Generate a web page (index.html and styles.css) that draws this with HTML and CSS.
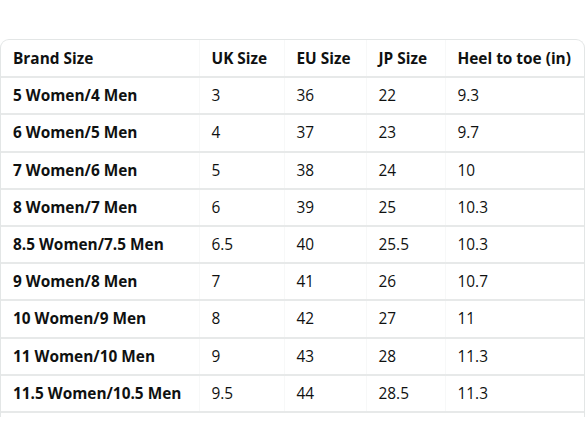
FILE: index.html
```html
<!DOCTYPE html>
<html lang="en">

<head>
    <meta charset="UTF-8">
    <meta name="viewport" content="width=device-width, initial-scale=1.0">
    <title>Size Chart</title>
    <link rel="stylesheet" href="styles.css">
</head>

<body>
    <div class="chart">
        <table>
            <tr>
                <th class="brand">Brand Size</th>
                <th class="uk">UK Size</th>
                <th class="eu">EU Size</th>
                <th class="jp">JP Size</th>
                <th>Heel to toe (in)</th>
            </tr>
            <tr><th>5 Women/4 Men</th><td>3</td><td>36</td><td>22</td><td>9.3</td></tr>
            <tr><th>6 Women/5 Men</th><td>4</td><td>37</td><td>23</td><td>9.7</td></tr>
            <tr><th>7 Women/6 Men</th><td>5</td><td>38</td><td>24</td><td>10</td></tr>
            <tr><th>8 Women/7 Men</th><td>6</td><td>39</td><td>25</td><td>10.3</td></tr>
            <tr><th>8.5 Women/7.5 Men</th><td>6.5</td><td>40</td><td>25.5</td><td>10.3</td></tr>
            <tr><th>9 Women/8 Men</th><td>7</td><td>41</td><td>26</td><td>10.7</td></tr>
            <tr><th>10 Women/9 Men</th><td>8</td><td>42</td><td>27</td><td>11</td></tr>
            <tr><th>11 Women/10 Men</th><td>9</td><td>43</td><td>28</td><td>11.3</td></tr>
            <tr><th>11.5 Women/10.5 Men</th><td>9.5</td><td>44</td><td>28.5</td><td>11.3</td></tr>
        </table>
    </div>
</body>

</html>
```

FILE: styles.css
```css
* {
    margin: 0;
    padding: 0;
    box-sizing: border-box;
}

body {
    background: #fff;
    font-family: "Open Sans", "Noto Sans", sans-serif;
    color: #0f1111;
}

.chart {
    margin-top: 39px;
    width: 585px;
    border: 1px solid #e3e6e6;
    border-bottom: none;
    border-radius: 9px 9px 0 0;
    padding-bottom: 4px;
}

table {
    width: 100%;
    border-collapse: collapse;
    table-layout: fixed;
}

th,
td {
    height: 37.2px;
    padding: 0 0 0 12px;
    text-align: left;
    font-size: 15.4px;
    white-space: nowrap;
    border-bottom: 2px solid #e7e9e9;
    border-left: 1px solid #f7f8f8;
}

th {
    font-weight: 700;
}

td {
    font-weight: 400;
}

tr > :first-child {
    border-left: none;
    padding-left: 12px;
}

.brand {
    width: 198px;
}

.uk {
    width: 85px;
}

.eu {
    width: 82px;
}

.jp {
    width: 79px;
}
```
